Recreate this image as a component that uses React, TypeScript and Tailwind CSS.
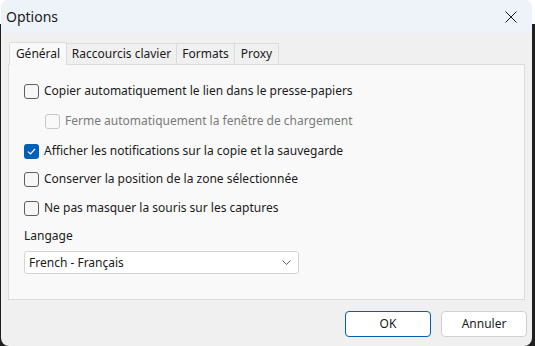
import React from 'react';

const font = { fontFamily: '"Noto Sans", "Liberation Sans", sans-serif' };

const Check: React.FC<{ checked?: boolean; disabled?: boolean; label: string; indent?: boolean }> = ({
  checked,
  disabled,
  label,
  indent,
}) => (
  <div className={`flex items-center gap-[5px] h-[14px] ${indent ? 'pl-[21px]' : ''}`}>
    {checked ? (
      <div className="w-[15px] h-[15px] rounded-[3px] bg-[#005fb8] flex items-center justify-center shrink-0">
        <svg width="9" height="7" viewBox="0 0 9 7" fill="none">
          <path d="M1 3.6 L3.4 6 L8 1" stroke="white" strokeWidth="1.2" />
        </svg>
      </div>
    ) : (
      <div
        className={`w-[15px] h-[15px] rounded-[3px] border shrink-0 ${
          disabled ? 'border-[#c8c8c8] bg-[#f9f9f9]' : 'border-[#5f5f5f] bg-[#f7f7f7]'
        }`}
      />
    )}
    <span className={`text-[12px] leading-none whitespace-nowrap ${disabled ? 'text-[#7a7a7a]' : 'text-[#1b1b1b]'}`}>
      {label}
    </span>
  </div>
);

export default function App() {
  return (
    <div
      className="w-[535px] h-[346px] bg-[linear-gradient(to_bottom,#ffffff_0,#ffffff_24px,#1f1f1f_24px)]"
      style={font}
    >
      <div className="ml-[1px] w-[531px] h-[346px] rounded-[8px] overflow-hidden bg-[#f0f0f0] flex flex-col">
        {/* title bar */}
        <div className="h-[33px] bg-[#eef3f9] flex items-center justify-between pl-[5px] pr-[15px] shrink-0">
          <span className="text-[14px] text-[#1a1a1a]">Options</span>
          <svg width="12" height="12" viewBox="0 0 12 12">
            <path d="M0.5 0.5 L11.5 11.5 M11.5 0.5 L0.5 11.5" stroke="#1a1a1a" strokeWidth="1" />
          </svg>
        </div>

        {/* tabs */}
        <div className="flex items-end h-[31px] pl-[8px] shrink-0 text-[12px] text-[#1a1a1a] whitespace-nowrap">
          <div className="h-[23px] w-[58px] bg-[#f9f9f9] border border-b-0 border-[#dcdcdc] rounded-t-[2px] flex items-center justify-center relative -mb-[1px] z-10">
            Général
          </div>
          <div className="h-[21px] w-[110px] border-t border-r border-[#dcdcdc] flex items-center justify-center">
            Raccourcis clavier
          </div>
          <div className="h-[21px] w-[58px] border-t border-r border-[#dcdcdc] flex items-center justify-center">
            Formats
          </div>
          <div className="h-[21px] w-[44px] border-t border-r border-[#dcdcdc] flex items-center justify-center">
            Proxy
          </div>
        </div>

        {/* panel */}
        <div className="mx-[7px] h-[236px] bg-[#f9f9f9] border border-[#dcdcdc] flex flex-col pl-[15px] pt-[19px] shrink-0">
          <div className="flex flex-col">
            <Check label="Copier automatiquement le lien dans le presse-papiers" />
            <div className="h-[16px]" />
            <Check disabled indent label="Ferme automatiquement la fenêtre de chargement" />
            <div className="h-[16px]" />
            <Check checked label="Afficher les notifications sur la copie et la sauvegarde" />
            <div className="h-[14px]" />
            <Check label="Conserver la position de la zone sélectionnée" />
            <div className="h-[15px]" />
            <Check label="Ne pas masquer la souris sur les captures" />
          </div>
          <div className="mt-[15px] text-[12px] text-[#1a1a1a] leading-none">Langage</div>
          <div className="mt-[9px] w-[275px] h-[23px] bg-white border border-[#d5d5d5] rounded-[3px] flex items-center justify-between pl-[4px] pr-[7px]">
            <span className="text-[12px] text-[#1a1a1a]">French - Français</span>
            <svg width="9" height="5" viewBox="0 0 9 5" fill="none">
              <path d="M0.5 0.5 L4.5 4.5 L8.5 0.5" stroke="#5a5a5a" strokeWidth="1" />
            </svg>
          </div>
        </div>

        {/* buttons */}
        <div className="flex justify-end gap-[10px] pr-[5px] pt-[11px]">
          <button className="w-[86px] h-[26px] bg-white border border-[#005fb8] rounded-[4px] text-[12px] text-[#1a1a1a]">
            OK
          </button>
          <button className="w-[86px] h-[26px] bg-white border border-[#d0d0d0] rounded-[4px] text-[12px] text-[#1a1a1a]">
            Annuler
          </button>
        </div>
      </div>
    </div>
  );
}
